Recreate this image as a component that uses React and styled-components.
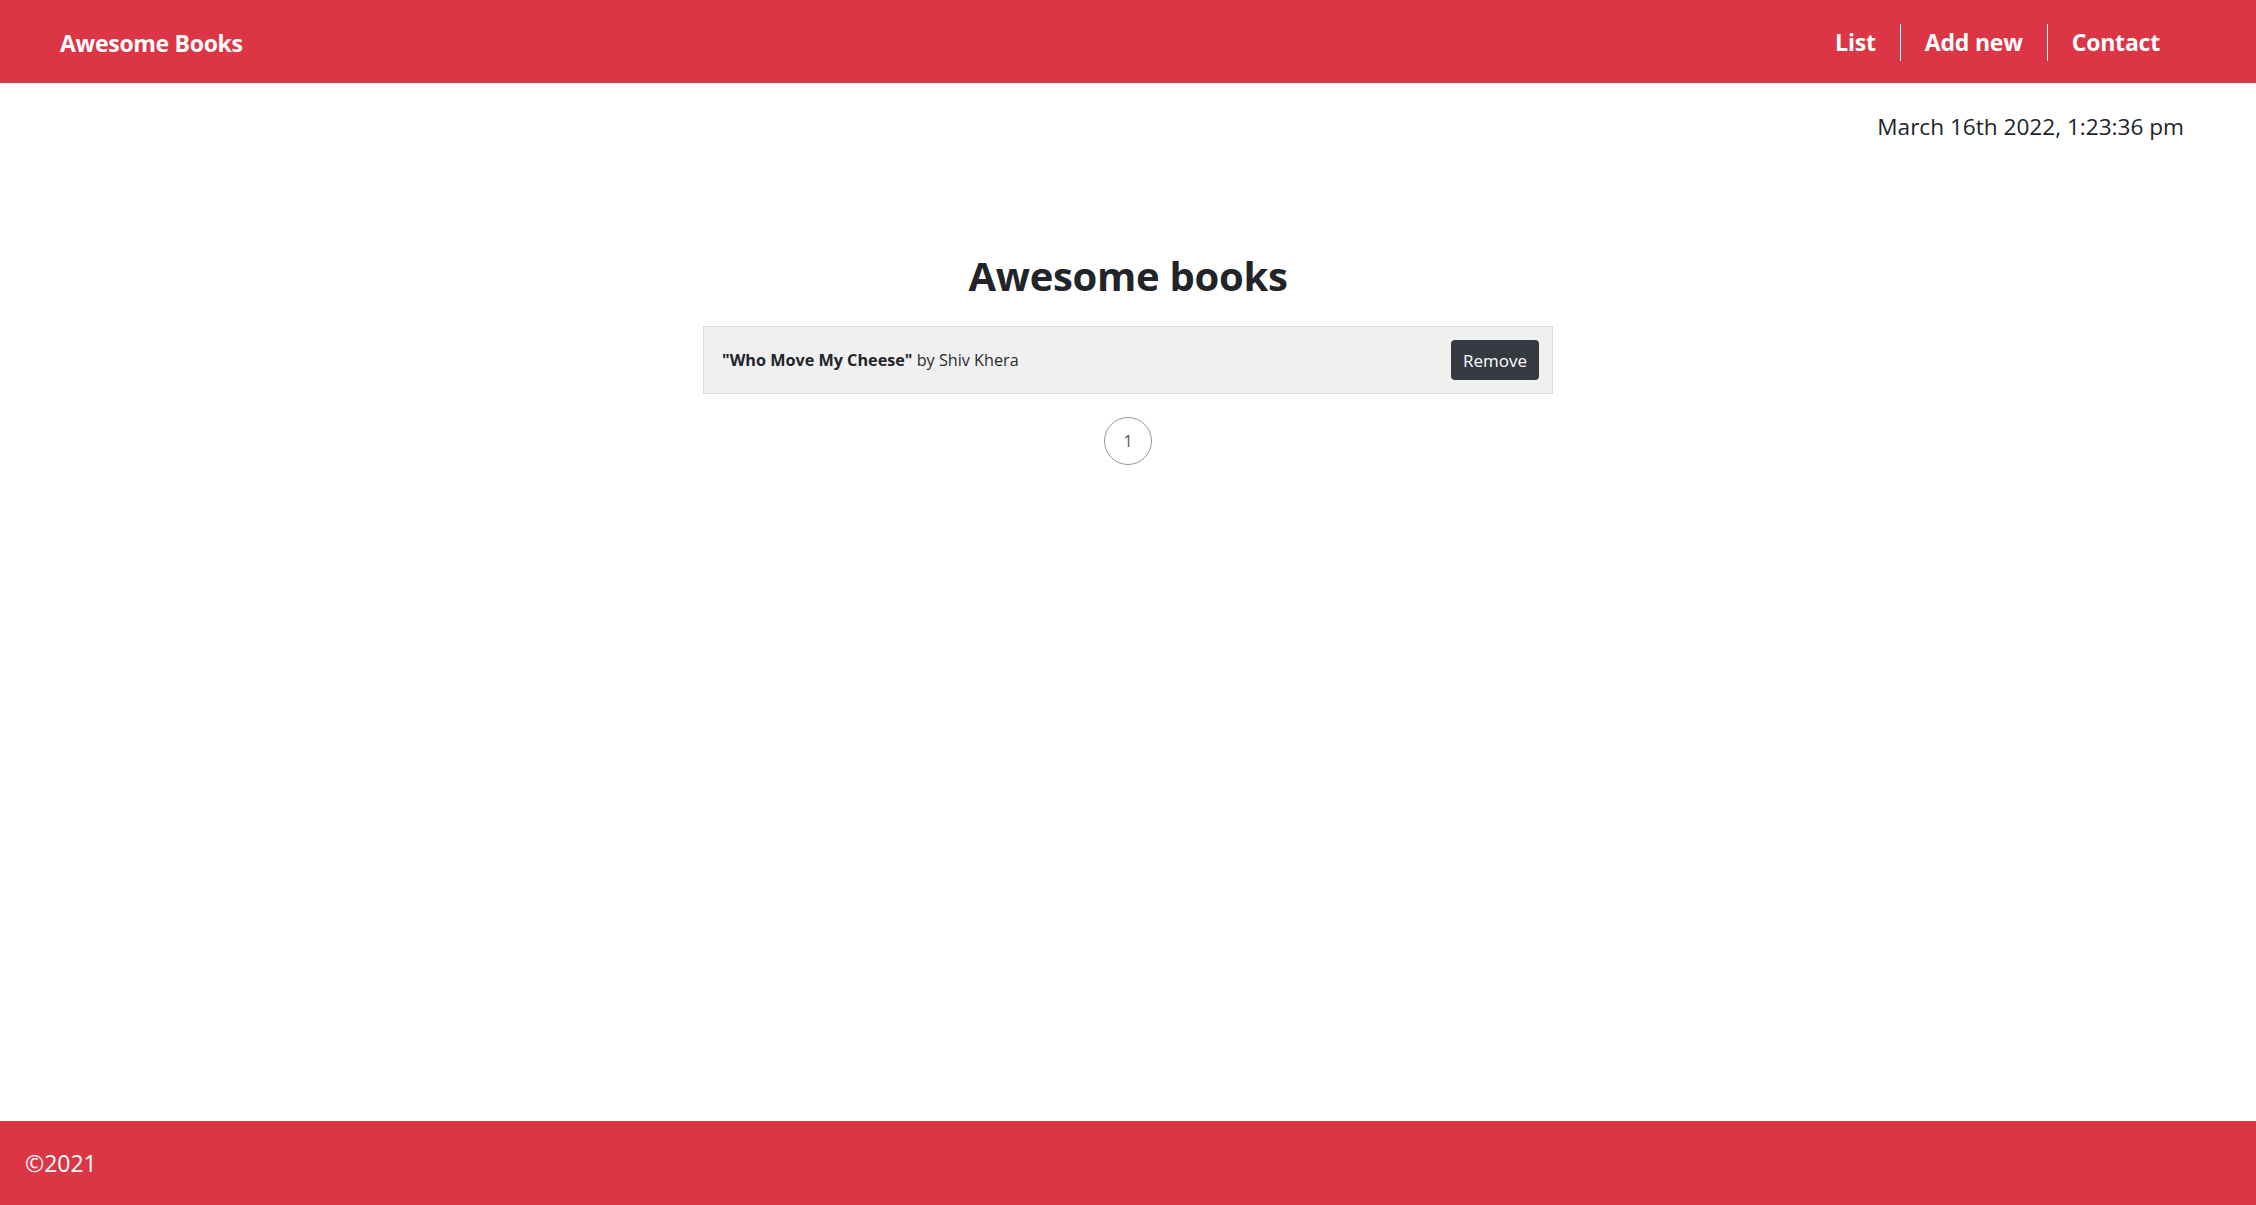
import React from 'react';
import styled, { createGlobalStyle } from 'styled-components';

const GlobalStyle = createGlobalStyle`
  html, body {
    margin: 0;
    padding: 0;
  }
  body {
    font-family: "Open Sans", "Noto Sans", "Liberation Sans", sans-serif;
    color: #212529;
    background: #fff;
  }
`;

const books = [{ title: 'Who Move My Cheese', author: 'Shiv Khera' }];

const Page = styled.div`
  display: flex;
  flex-direction: column;
  min-height: 100vh;
`;

const Header = styled.header`
  display: flex;
  align-items: center;
  justify-content: space-between;
  box-sizing: border-box;
  height: 83px;
  padding: 2px 72px 0 60px;
  background: #dc3545;
`;

const Brand = styled.a`
  color: #fff;
  font-size: 23px;
  font-weight: 700;
  text-decoration: none;
  letter-spacing: -0.3px;
`;

const Nav = styled.nav`
  display: flex;
  align-items: center;
`;

const NavLink = styled.a`
  color: #fff;
  font-size: 23px;
  font-weight: 700;
  line-height: 37px;
  padding: 0 24px;
  text-decoration: none;
  letter-spacing: -0.2px;
  border-left: ${p => (p.first ? 'none' : '1px solid #fff')};
`;

const Main = styled.main`
  flex: 1;
  display: flex;
  flex-direction: column;
  align-items: center;
  padding: 0 72px;
`;

const DateLine = styled.div`
  align-self: flex-end;
  margin-top: 29px;
  font-size: 22.6px;
  line-height: 30px;
`;

const Title = styled.h1`
  margin: 106px 0 22px;
  font-size: 40px;
  line-height: 56px;
  font-weight: 700;
  letter-spacing: -0.3px;
`;

const BookList = styled.ul`
  list-style: none;
  margin: 0;
  padding: 0;
  width: 850px;
`;

const BookRow = styled.li`
  display: flex;
  align-items: center;
  justify-content: space-between;
  box-sizing: border-box;
  height: 68px;
  padding: 0 13px 0 18px;
  background: #f0f0f0;
  border: 1px solid #dedede;
  font-size: 16.2px;
`;

const BookTitle = styled.strong`
  font-weight: 700;
`;

const Author = styled.span`
  color: #2a2a2a;
  font-weight: 400;
`;

const RemoveButton = styled.button`
  height: 40px;
  padding: 0 12px;
  border: none;
  border-radius: 4px;
  background: #343a40;
  color: #fff;
  font-family: inherit;
  font-size: 17px;
`;

const Pager = styled.div`
  display: flex;
  gap: 8px;
  margin-top: 23px;
`;

const PageDot = styled.span`
  display: flex;
  align-items: center;
  justify-content: center;
  width: 46px;
  height: 46px;
  border: 1px solid #999;
  border-radius: 50%;
  color: #555;
  font-size: 16px;
`;

const Footer = styled.footer`
  display: flex;
  align-items: center;
  height: 84px;
  padding: 0 25px;
  background: #dc3545;
  color: #fff;
  font-size: 23px;
`;

export default function App() {
  return (
    <Page>
      <GlobalStyle />
      <Header>
        <Brand href="#">Awesome Books</Brand>
        <Nav>
          <NavLink href="#" first>List</NavLink>
          <NavLink href="#">Add new</NavLink>
          <NavLink href="#">Contact</NavLink>
        </Nav>
      </Header>
      <Main>
        <DateLine>March 16th 2022, 1:23:36 pm</DateLine>
        <Title>Awesome books</Title>
        <BookList>
          {books.map(b => (
            <BookRow key={b.title}>
              <span>
                <BookTitle>"{b.title}"</BookTitle> <Author>by {b.author}</Author>
              </span>
              <RemoveButton>Remove</RemoveButton>
            </BookRow>
          ))}
        </BookList>
        <Pager>
          <PageDot>1</PageDot>
        </Pager>
      </Main>
      <Footer>©2021</Footer>
    </Page>
  );
}
